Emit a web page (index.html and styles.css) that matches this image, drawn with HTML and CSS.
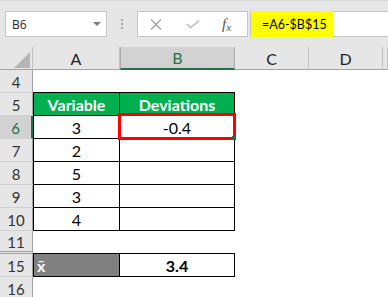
FILE: index.html
```html
<!DOCTYPE html>
<html>
<head>
<meta charset="utf-8">
<title>Sheet</title>
<link rel="stylesheet" href="styles.css">
</head>
<body>
<div class="fbar">
  <div class="namebox"><span class="ref">B6</span><svg class="dd" width="8" height="4" viewBox="0 0 8 4"><path d="M0 0H8L4 4Z" fill="#7a7a7a"/></svg></div>
  <div class="grip"><i></i><i></i><i></i></div>
  <div class="btns">
    <svg class="ic-x" width="12" height="11" viewBox="0 0 12 11"><path d="M1 0.5L11 10.5M11 0.5L1 10.5" stroke="#a3a3a3" stroke-width="1.4" fill="none"/></svg>
    <svg class="ic-ok" width="14" height="9" viewBox="0 0 14 9"><path d="M0.8 3.8L4.6 7.6L13.2 0.8" stroke="#c3c3c3" stroke-width="1.8" fill="none"/></svg>
    <span class="fx">f<span class="fx-x">x</span></span>
  </div>
  <div class="input"><span class="hl">=A6-$B$15</span></div>
</div>
<div class="sheet">
  <div class="row hdr">
    <div class="corner"><svg width="16" height="16" viewBox="0 0 16 16"><path d="M16 0V16H0Z" fill="#b5b5b5"/></svg></div>
    <div class="ch">A</div><div class="ch sel">B</div><div class="ch">C</div><div class="ch">D</div><div class="ch"></div>
  </div>
  <div class="row"><div class="rh">4</div><div class="c b-b"></div><div class="c b-b"></div><div class="c"></div><div class="c"></div><div class="c"></div></div>
  <div class="row"><div class="rh">5</div><div class="c b-l b-r b-b green">Variable</div><div class="c b-r b-b green">Deviations</div><div class="c"></div><div class="c"></div><div class="c"></div></div>
  <div class="row"><div class="rh sel">6</div><div class="c b-l b-r b-b">3</div><div class="c b-r b-b active">-0.4</div><div class="c"></div><div class="c"></div><div class="c"></div></div>
  <div class="row"><div class="rh">7</div><div class="c b-l b-r b-b">2</div><div class="c b-r b-b"></div><div class="c"></div><div class="c"></div><div class="c"></div></div>
  <div class="row"><div class="rh">8</div><div class="c b-l b-r b-b">5</div><div class="c b-r b-b"></div><div class="c"></div><div class="c"></div><div class="c"></div></div>
  <div class="row"><div class="rh">9</div><div class="c b-l b-r b-b">3</div><div class="c b-r b-b"></div><div class="c"></div><div class="c"></div><div class="c"></div></div>
  <div class="row"><div class="rh">10</div><div class="c b-l b-r b-b">4</div><div class="c b-r b-b"></div><div class="c"></div><div class="c"></div><div class="c"></div></div>
  <div class="row"><div class="rh hidden-after">11</div><div class="c b-b"></div><div class="c b-b"></div><div class="c"></div><div class="c"></div><div class="c"></div></div>
  <div class="row"><div class="rh">15</div><div class="c b-l b-r b-b mean">x̄</div><div class="c b-r b-b bold">3.4</div><div class="c"></div><div class="c"></div><div class="c"></div></div>
  <div class="row"><div class="rh">16</div><div class="c"></div><div class="c"></div><div class="c"></div><div class="c"></div><div class="c"></div></div>
</div>
</body>
</html>
```
FILE: styles.css
```css
* { box-sizing: border-box; }
html, body { margin: 0; padding: 0; }
body {
  width: 388px;
  height: 297px;
  overflow: hidden;
  background: #fff;
  font-family: Lato, "Liberation Sans", sans-serif;
}

/* formula bar */
.fbar {
  height: 47px;
  background: #e6e6e6;
  border-top: 1px solid #d6d6d6;
  padding: 10px 0 0 5px;
  display: flex;
  align-items: flex-start;
}
.namebox {
  width: 102px;
  height: 26px;
  background: #fff;
  border: 1px solid #c6c6c6;
  display: flex;
  align-items: center;
  justify-content: space-between;
  padding: 0 5px 0 6px;
  font: 12px "Open Sans", sans-serif;
  color: #262626;
}
.grip {
  width: 30px;
  height: 26px;
  display: flex;
  flex-direction: column;
  align-items: center;
  justify-content: center;
  gap: 2px;
}
.grip i {
  display: block;
  width: 2px;
  height: 2px;
  background: #a6a6a6;
}
.btns {
  width: 111px;
  height: 26px;
  background: #fff;
  border: 1px solid #c6c6c6;
  display: flex;
  align-items: center;
  padding-left: 12px;
}
.ic-ok { margin-left: 24px; }
.fx {
  margin-left: 22px;
  font: italic 15px "Liberation Serif", serif;
  color: #555;
}
.fx-x {
  font-size: 11px;
  position: relative;
  top: 2px;
}
.input {
  flex: 1;
  height: 26px;
  margin-left: 2px;
  background: #fff;
  border: 1px solid #c6c6c6;
  border-right: none;
  display: flex;
}
.hl {
  margin: -1px 0;
  background: #ffff00;
  padding: 0 6px 0 11px;
  display: flex;
  align-items: center;
  font: 12.5px Lato, sans-serif;
  color: #000;
}

/* sheet */
.row {
  display: grid;
  grid-template-columns: 33px 87px 115px 74px 74px 1fr;
  height: 23px;
}
.corner, .ch {
  background: #e6e6e6;
  border-right: 1px solid #c2c2c2;
  border-bottom: 1px solid #a3a3a3;
}
.corner {
  display: flex;
  justify-content: flex-end;
  align-items: flex-end;
  padding: 0 2px 1px 0;
}
.ch {
  display: flex;
  align-items: center;
  justify-content: center;
  font-size: 16px;
  color: #222;
}
.ch.sel {
  background: #d2d2d2;
  border-left: 1px solid #ababab;
  border-right: 1px solid #ababab;
  border-bottom: 2px solid #217346;
  color: #217346;
}
.rh {
  background: #e6e6e6;
  border-right: 1px solid #a3a3a3;
  border-bottom: 1px solid #d0d0d0;
  display: flex;
  align-items: center;
  justify-content: center;
  font-size: 15px;
  color: #333;
  padding-top: 1px;
}
.rh.sel {
  background: #d2d2d2;
  border-right: 2px solid #217346;
  color: #217346;
}
.rh.hidden-after {
  border-bottom: 3px double #a3a3a3;
}
.c {
  display: flex;
  align-items: center;
  justify-content: center;
  font-size: 16px;
  color: #000;
  padding-top: 1px;
}
.b-l { border-left: 1px solid #000; }
.b-r { border-right: 1px solid #000; }
.b-b { border-bottom: 1px solid #000; }
.green {
  background: #00b050;
  color: #fff;
  font-weight: 700;
}
.bold { font-weight: 700; }
.mean {
  background: #808080;
  color: #fff;
  font-weight: 700;
  justify-content: flex-start;
  padding-left: 3px;
}
.active { position: relative; }
.active::after {
  content: "";
  position: absolute;
  top: -3px;
  left: -2px;
  right: -2px;
  bottom: -2px;
  border: 3px solid #ff0000;
}
.active::before {
  content: "";
  position: absolute;
  left: 112px;
  top: 20px;
  width: 3px;
  height: 3px;
  background: #217346;
  z-index: 1;
}
```
